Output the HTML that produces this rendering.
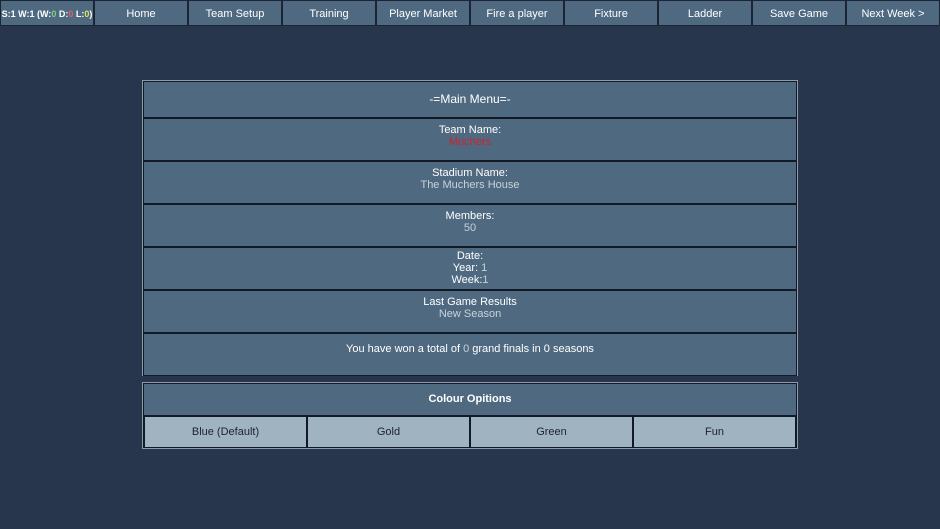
<!DOCTYPE html>
<html><head><style>
*{margin:0;padding:0;box-sizing:border-box}
body{width:940px;height:529px;background:#27364d;font-family:"Liberation Sans",Arial,sans-serif;font-size:11px;color:#fff;position:relative;overflow:hidden}
.nav{position:absolute;top:0;height:26px;background:#4f6a80;border:1px solid #1a2433;text-align:center;line-height:26px;font-size:11px;color:#fff}
.box{position:absolute;left:142px;width:656px;border:1px solid #8d9cab;background:#111a26}
.row{position:absolute;left:0;width:654px;height:43px;background:#4f6a80;border:1px solid #111a26;text-align:center;padding-top:5px;line-height:12px}
.g{color:#c8d2da}
.c{position:absolute;top:33px;height:32px;background:#9fb3c1;border:1px solid #111a26;color:#1b2430;text-align:center;line-height:30px}
</style></head><body>
<div class="nav" style="left:0;width:94px;font-size:9px;font-weight:bold">S:1 W:1 (W:<span style="color:#7fd07f">0</span> D:<span style="color:#e06060">0</span> L:<span style="color:#e0e060">0</span>)</div>
<div class="nav" style="left:94px;width:94px">Home</div>
<div class="nav" style="left:188px;width:94px">Team Setup</div>
<div class="nav" style="left:282px;width:94px">Training</div>
<div class="nav" style="left:376px;width:94px">Player Market</div>
<div class="nav" style="left:470px;width:94px">Fire a player</div>
<div class="nav" style="left:564px;width:94px">Fixture</div>
<div class="nav" style="left:658px;width:94px">Ladder</div>
<div class="nav" style="left:752px;width:94px">Save Game</div>
<div class="nav" style="left:846px;width:94px">Next Week &gt;</div>

<div class="box" style="top:80px;height:296px">
<div class="row" style="top:0;height:37px;padding-top:0;line-height:35px;font-size:12px">-=Main Menu=-</div>
<div class="row" style="top:37px">Team Name:<br><span style="color:#d0202a">Muchers</span></div>
<div class="row" style="top:80px">Stadium Name:<br><span class="g">The Muchers House</span></div>
<div class="row" style="top:123px">Members:<br><span class="g">50</span></div>
<div class="row" style="top:166px;padding-top:2px">Date:<br>Year: <span class="g">1</span><br>Week:<span class="g">1</span></div>
<div class="row" style="top:209px">Last Game Results<br><span class="g">New Season</span></div>
<div class="row" style="top:252px;padding-top:0;line-height:31px">You have won a total of <span class="g">0</span> grand finals in 0 seasons</div>
</div>

<div class="box" style="top:382px;height:67px">
<div class="row" style="top:0;height:33px;padding-top:0;line-height:31px;font-weight:bold">Colour Opitions</div>
<div class="c" style="left:1px;width:163px">Blue (Default)</div>
<div class="c" style="left:164px;width:163px">Gold</div>
<div class="c" style="left:327px;width:163px">Green</div>
<div class="c" style="left:490px;width:163px">Fun</div>
</div>
</body></html>
